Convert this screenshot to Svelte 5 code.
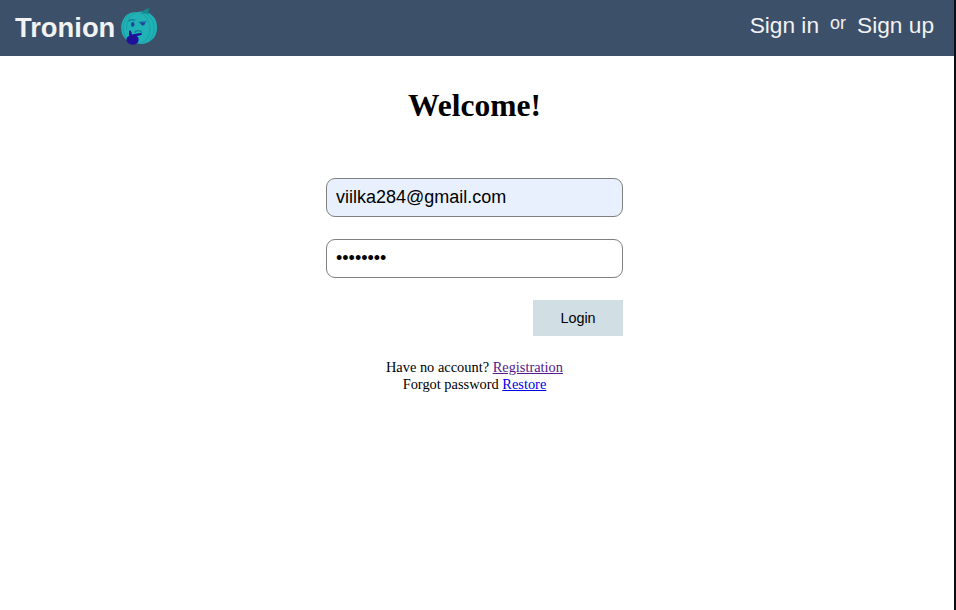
<script>
  let email = $state('viilka284@gmail.com');
  let password = $state('password');
</script>

<div class="page">
  <header>
    <div class="brand">
      <span>Tronion</span>
      <svg width="38" height="38" viewBox="0 0 38 38" aria-hidden="true">
        <path d="M17 4.3C24 2.6 29 4.2 32.5 7.8C38.5 13 38.5 26 32.5 31.3C27.5 36 22 36.5 18 35.5C11 37 4 31.5 2 25.5C-.5 17 3 8.5 9 5.5C12 4 15 4 17 4.3Z" fill="#20b2b5" />
        <path d="M19.5 5.8C22 5 23 3 25 1.8C26.5 .9 28.3 .7 29.7 0C28.5 2 27.6 3.7 29 6.4C26 5.2 23 5.2 19.5 5.8Z" fill="#16898f" />
        <g fill="none" stroke="#168f98" stroke-width=".8" opacity=".7">
          <path d="M9 6C3 12 1 21 6 30M15 5C9 7 6 14 6.5 22M23 6C27 9 30 14 30 20C30 28 27 33 21 35M27 6C35 12 37 24 29 33" />
        </g>
        <g fill="none" stroke="#167891" stroke-width="1.3">
          <path d="M8.5 13.3C10 11.5 13 11.5 15 12.5M19 14.4L26.5 13.7" />
        </g>
        <ellipse cx="12.7" cy="16.4" rx="1.7" ry="2.4" fill="#24409d" />
        <path d="M19.5 14.6H25.3C25 18 21.5 18.4 20.8 15.7Z" fill="#24409d" />
        <path d="M14.5 24.5C16.5 21.8 20.5 22 22 24.5" fill="none" stroke="#187b94" stroke-width="1.3" />
        <path d="M9 23C10.5 21.5 11.8 23.5 11.8 26.5L20 25C23 25.2 22.5 27 20 27.2L16.5 28.2C18.5 29 19.5 31 18 34C16.5 37.5 9.5 37.5 7.2 34C5.5 30.5 7 29 9 28Z" fill="#20109a" />
      </svg>
    </div>
    <nav><a href="#signin">Sign in</a><span>or</span><a href="#signup">Sign up</a></nav>
  </header>
  <main>
    <h1>Welcome!</h1>
    <form onsubmit={(e) => e.preventDefault()}>
      <input class="email" type="text" aria-label="Email" bind:value={email} />
      <input type="password" aria-label="Password" bind:value={password} />
      <button type="submit">Login</button>
    </form>
    <div class="help">
      <div>Have no account? <a class="visited" href="#registration">Registration</a></div>
      <div>Forgot password <a href="#restore">Restore</a></div>
    </div>
  </main>
</div>

<style>
  .page {
    box-sizing: border-box;
    height: 610px;
    border-right: 2px solid #080f15;
    background: #fff;
    color: #000;
    font-family: "Liberation Serif", serif;
  }
  header {
    display: flex;
    justify-content: space-between;
    box-sizing: border-box;
    height: 56px;
    padding: 0 20px 0 15px;
    background: #3c506a;
    color: #f2f2f2;
    font-family: "Liberation Sans", sans-serif;
  }
  .brand {
    display: flex;
    gap: 5px;
    height: 54px;
    align-items: center;
    font-size: 27.36px;
    font-weight: bold;
  }
  .brand span {
    padding-top: 2px;
  }
  nav {
    display: flex;
    gap: 11px;
    padding-top: 12px;
    font-size: 22.7px;
    line-height: 26px;
  }
  nav a {
    color: inherit;
    text-decoration: none;
  }
  nav span {
    font-size: 18px;
    line-height: 22px;
  }
  main {
    display: flex;
    flex-direction: column;
    align-items: center;
    padding: 31px 5px 0 0;
  }
  h1 {
    margin: 0 0 54px;
    font-size: 31.5px;
    line-height: 37px;
  }
  form {
    display: flex;
    flex-direction: column;
    gap: 22px;
    width: 297px;
  }
  input {
    box-sizing: border-box;
    width: 100%;
    height: 39px;
    margin: 0;
    padding: 0 9px;
    border: 1px solid #808080;
    border-radius: 9px;
    outline: none;
    background: #fff;
    color: #000;
    font: 18px "Liberation Sans", sans-serif;
  }
  .email {
    background: #e8f0fe;
  }
  button {
    align-self: flex-end;
    width: 90px;
    height: 36px;
    padding: 0;
    border: 0;
    background: #d1dee4;
    color: #000;
    font: 14.4px "Liberation Sans", sans-serif;
  }
  .help {
    margin-top: 23px;
    font-size: 14.4px;
    line-height: 17px;
    text-align: center;
  }
  .help a {
    color: #0000ee;
  }
  .help .visited {
    color: #551a8b;
  }
</style>
